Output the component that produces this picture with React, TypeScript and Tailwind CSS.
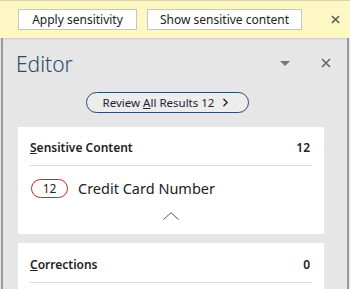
import { ChevronRight } from 'lucide-react';

function CloseIcon({ className }: { className?: string }) {
  return (
    <svg viewBox="0 0 10 10" className={className} fill="none" stroke="currentColor" strokeWidth="1.6">
      <path d="M1 1 L9 9 M9 1 L1 9" />
    </svg>
  );
}

export default function App() {
  return (
    <div className="w-[350px] h-[289px] overflow-hidden bg-[#e6e6e6] text-[#262626]" style={{ fontFamily: '"Noto Sans", "Open Sans", sans-serif' }}>
      {/* Barra amarilla */}
      <div className="h-[38px] bg-[#fcf7c3] border-t border-[#d8d4a8] flex items-center shadow-[0_1px_2px_rgba(0,0,0,0.12)]">
        <button className="ml-[18px] w-[119px] h-[21px] bg-white border border-[#c6c6c6] text-[12px] leading-none text-[#222]">
          Apply sensitivity
        </button>
        <button className="ml-[10px] w-[155px] h-[21px] bg-white border border-[#c6c6c6] text-[12px] leading-none text-[#222]">
          Show sensitive content
        </button>
        <CloseIcon className="w-[9px] h-[9px] ml-auto mr-[10px] text-[#555]" />
      </div>

      {/* Panel Editor */}
      <div className="h-[251px] border-l-2 border-r-2 border-[#9a9a9a] ml-[1px] mr-[1px] flex flex-col">
        <div className="flex items-center h-[42px] mt-[6px] pl-[13px]">
          <span className="text-[21px] font-light text-[#2c4a70]">Editor</span>
          <div className="ml-auto mr-[31px] -mt-[4px] w-0 h-0 border-l-[5px] border-r-[5px] border-t-[5px] border-l-transparent border-r-transparent border-t-[#777]" />
          <CloseIcon className="w-[10px] h-[10px] mr-[16px] -mt-[4px] text-[#666]" />
        </div>

        <div className="flex mt-[6px]">
          <button className="ml-[83px] w-[163px] h-[21px] rounded-full border border-[#2c4a70] bg-[#ededed] flex items-center justify-center text-[11.5px] leading-none text-[#223]">
            <span>
              Review <span className="underline">A</span>ll Results 12
            </span>
            <ChevronRight className="w-[13px] h-[13px] ml-[5px]" strokeWidth={2.5} />
          </button>
        </div>

        <div className="ml-[15px] w-[306px] mt-[14px] h-[107px] bg-white flex flex-col px-[12px]">
          <div className="flex items-center justify-between h-[39px] pt-[3px] border-b border-[#dcdcdc] text-[12px] font-semibold text-[#222]">
            <span>
              <span className="underline">S</span>ensitive Content
            </span>
            <span className="mr-[2px]">12</span>
          </div>
          <div className="flex items-center mt-[13px]">
            <span className="ml-[1px] w-[37px] h-[19px] rounded-full border border-[#c42a2a] flex items-center justify-center text-[12px] leading-none">
              12
            </span>
            <span className="ml-[10px] text-[14.5px] leading-none text-[#222]">Credit Card Number</span>
          </div>
          <div className="flex justify-center mt-[14px]">
            <svg viewBox="0 0 16 8" className="w-[16px] h-[8px] text-[#555]" fill="none" stroke="currentColor" strokeWidth="1">
              <path d="M0.5 7.5 L8 0.7 L15.5 7.5" />
            </svg>
          </div>
        </div>

        <div className="ml-[15px] w-[306px] mt-[9px] flex-1 bg-white flex flex-col px-[12px]">
          <div className="flex items-center justify-between h-[40px] pt-[5px] border-b border-[#dcdcdc] text-[12px] font-semibold text-[#222]">
            <span>
              <span className="underline">C</span>orrections
            </span>
            <span className="mr-[2px]">0</span>
          </div>
        </div>
      </div>
    </div>
  );
}
